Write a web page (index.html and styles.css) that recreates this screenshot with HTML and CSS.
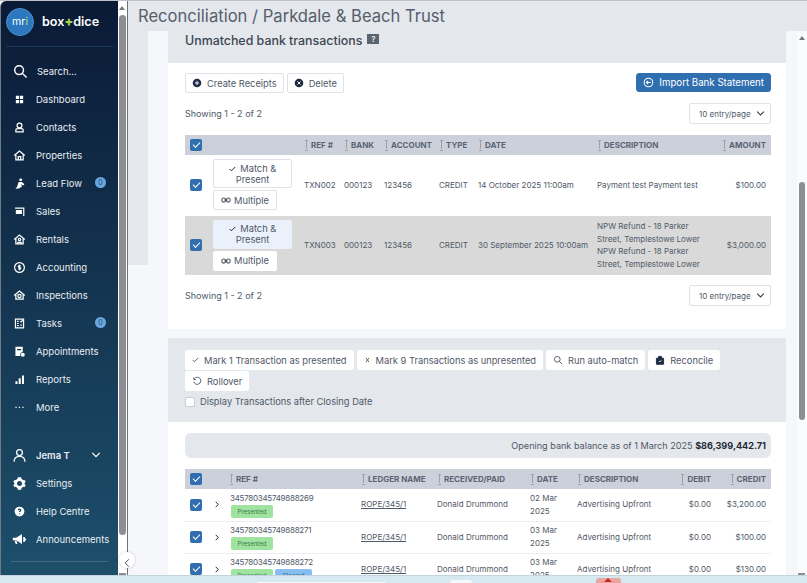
FILE: index.html
```html
<!DOCTYPE html>
<html lang="en">
<head>
<meta charset="UTF-8">
<title>Reconciliation / Parkdale &amp; Beach Trust</title>
<link rel="stylesheet" href="styles.css">
</head>
<body>
<div class="app">
    <aside class="sidebar">
        <div class="brand">
            <span class="brand-mark">mr<em>i</em></span>
            <span class="brand-name">box<b>+</b>dice</span>
        </div>
        <nav class="nav">
            <a class="nav-search"><svg viewBox="0 0 16 16"><circle cx="6.5" cy="6.5" r="4.7"/><path d="M10 10l4.5 4.5"/></svg><span>Search...</span></a>
            <a><svg viewBox="0 0 16 16"><path class="fill" d="M3.500 3.500h4v4h-4zM8.500 3.500h4v4h-4zM3.500 8.500h4v4h-4zM8.500 8.500h4v4h-4z"/></svg><span>Dashboard</span></a>
            <a><svg viewBox="0 0 16 16"><circle cx="8" cy="5.500" r="3"/><path d="M3.500 13.500v-2c0-1 1-2 2.500-2h4c1.500 0 2.500 1 2.500 2v2z"/></svg><span>Contacts</span></a>
            <a><svg viewBox="0 0 16 16"><path d="M1.500 8L8 2.500 14.500 8M3.500 7v6.500h9V7M6.500 13.500V9.500h3v4"/></svg><span>Properties</span></a>
            <a><svg viewBox="0 0 16 16"><circle class="fill" cx="9.500" cy="3.500" r="1.800"/><path class="fill" d="M7 6h4l3 3-1.500 1.500L10 9l1 3-4 2-4 .5 2-2.500 1-3z"/></svg><span>Lead Flow</span><i class="badge">0</i></a>
            <a><svg viewBox="0 0 16 16"><path class="fill" d="M2.500 3H14v10.500h-1.500V4.500h-10zM3.500 6h7.500v5H3.500z"/></svg><span>Sales</span></a>
            <a><svg viewBox="0 0 16 16"><path d="M1.500 8L8 2.500 14.500 8M3.500 7v6.500h9V7"/><circle cx="8" cy="8" r="1.500"/><path d="M6 13.500v-2h4v2"/></svg><span>Rentals</span></a>
            <a><svg viewBox="0 0 16 16"><circle cx="8" cy="8" r="6"/><path d="M8 4.500v7M9.500 6H7.500a1 1 0 000 2h1a1 1 0 010 2H6.500"/></svg><span>Accounting</span></a>
            <a><svg viewBox="0 0 16 16"><path d="M1.500 8L8 2.500 14.500 8M3.500 7v5.500h9V7"/><circle cx="8" cy="8.500" r="2"/></svg><span>Inspections</span></a>
            <a><svg viewBox="0 0 16 16"><path d="M3 2.500h10v11H3zM5 5.500h2M5 8h2M5 10.500h2M9 5l1 1 2-2M9 9.500l2 1"/></svg><span>Tasks</span><i class="badge">0</i></a>
            <a><svg viewBox="0 0 16 16"><path class="fill" d="M3 2h9v6.500a4 4 0 00-3 5H3zM5 5v1.500h5V5z"/><circle class="fill" cx="12" cy="12" r="2.500"/></svg><span>Appointments</span></a>
            <a><svg viewBox="0 0 16 16"><path class="fill" d="M3 10h2.500v3.500H3zM7 6.500h2.500v7H7zM11 3h2.500v10.500H11z"/></svg><span>Reports</span></a>
            <a><svg viewBox="0 0 16 16"><path class="fill" d="M3 7h1.500v1.500H3zM7.200 7h1.500v1.500H7.200zM11.500 7H13v1.500h-1.500z"/></svg><span>More</span></a>
        </nav>
        <div class="nav nav-bottom">
            <a class="nav-user"><svg class="big" viewBox="0 0 18 18"><circle cx="9" cy="5.500" r="3.500"/><path d="M2.500 16.500c0-4 2.500-6.500 6.500-6.500s6.500 2.500 6.500 6.500"/></svg><span>Jema T</span><svg class="chev" viewBox="0 0 12 8"><path d="M1.500 1.500L6 6l4.500-4.500"/></svg></a>
            <a><svg class="big" viewBox="0 0 18 18"><circle cx="9" cy="9" r="4.500" stroke-width="3"/><path class="fill" d="M7 1.500h4l.5 2.500h-5zM7 16.500h4l.5-2.500h-5zM1.500 6.500l2-2 2 1.500-2 3zM16.500 6.500l-2-2-2 1.500 2 3zM1.500 11.500l2 2 2-1.500-2-3zM16.500 11.500l-2 2-2-1.500 2-3z"/></svg><span>Settings</span></a>
            <a><svg viewBox="0 0 16 16"><circle class="fill" cx="8" cy="8" r="6"/><path class="cut" d="M6.500 6.500a1.500 1.500 0 113 0c0 1-1.500 1-1.500 2.200M8 10.500v1"/></svg><span>Help Centre</span></a>
            <a><svg class="big" viewBox="0 0 18 18"><path class="fill" d="M1 7h4l7-4.500v12L5 10H1zM3 10.500h2.500l1 4h-2zM13.500 6h1.500l2 3-2 3h-1.500z"/></svg><span>Announcements</span></a>
        </div>
        <div class="sidebar-rule"></div>
    </aside>
    <div class="side-scroll"><span class="thumb"></span></div>
    <main class="main">
        <button class="collapse"><svg viewBox="0 0 8 12"><path d="M6.500 1L1.500 6l5 5"/></svg></button>
        <h1 class="page-title">Reconciliation / Parkdale &amp; Beach Trust</h1>
        <div class="page-body">
            <div class="cards">
                <section class="card">
                    <h2 class="card-head">Unmatched bank transactions <span class="help">?</span></h2>
                    <div class="card-body">
                        <div class="toolbar">
                            <button class="btn"><svg viewBox="0 0 14 14"><circle class="dark" cx="7" cy="7" r="6"/><path class="lines" d="M7 4v6M4 7h6"/></svg>Create Receipts</button>
                            <button class="btn"><svg viewBox="0 0 14 14"><circle class="dark" cx="7" cy="7" r="6"/><path class="lines" d="M4.800 4.800l4.400 4.400M9.200 4.800l-4.400 4.400"/></svg>Delete</button>
                            <button class="btn btn-primary"><svg viewBox="0 0 14 14"><circle cx="7" cy="7" r="5.500"/><path d="M10 7H4.500M6.500 4.800L4.300 7l2.200 2.200"/></svg>Import Bank Statement</button>
                        </div>
                        <div class="pager">
                            <span>Showing 1 - 2 of 2</span>
                            <span class="entry">10 entry/page<svg viewBox="0 0 12 8"><path d="M1.500 1.500L6 6l4.500-4.500"/></svg></span>
                        </div>
                        <table class="grid grid-bank">
                            <colgroup><col class="c-check"><col class="c-match"><col class="c-ref"><col class="c-bank"><col class="c-acc"><col class="c-type"><col class="c-date"><col class="c-desc"><col class="c-amt"></colgroup>
                            <thead><tr>
                                <th><span class="check"></span></th><th></th>
                                <th><i class="sort"></i>REF #</th><th><i class="sort"></i>BANK</th><th><i class="sort"></i>ACCOUNT</th><th><i class="sort"></i>TYPE</th><th><i class="sort"></i>DATE</th><th><i class="sort"></i>DESCRIPTION</th><th class="num"><i class="sort"></i>AMOUNT</th>
                            </tr></thead>
                            <tbody>
                                <tr>
                                    <td><span class="check"></span></td>
                                    <td>
                                        <button class="btn btn-match"><svg viewBox="0 0 10 8"><path d="M1 4l2.500 2.500L9 1"/></svg> Match &amp;<br>Present</button>
                                        <button class="btn btn-multi"><svg viewBox="0 0 12 8"><rect x="1" y="1.500" width="4.500" height="5" rx="2.200"/><rect x="6.500" y="1.500" width="4.500" height="5" rx="2.200"/><path d="M4 4h4"/></svg>Multiple</button>
                                    </td>
                                    <td>TXN002</td><td>000123</td><td>123456</td><td>CREDIT</td><td>14 October 2025 11:00am</td><td>Payment test Payment test</td><td class="num">$100.00</td>
                                </tr>
                                <tr class="picked">
                                    <td><span class="check"></span></td>
                                    <td>
                                        <button class="btn btn-match"><svg viewBox="0 0 10 8"><path d="M1 4l2.500 2.500L9 1"/></svg> Match &amp;<br>Present</button>
                                        <button class="btn btn-multi"><svg viewBox="0 0 12 8"><rect x="1" y="1.500" width="4.500" height="5" rx="2.200"/><rect x="6.500" y="1.500" width="4.500" height="5" rx="2.200"/><path d="M4 4h4"/></svg>Multiple</button>
                                    </td>
                                    <td>TXN003</td><td>000123</td><td>123456</td><td>CREDIT</td><td>30 September 2025 10:00am</td><td class="desc-long">NPW Refund - 18 Parker Street, Templestowe Lower NPW Refund - 18 Parker Street, Templestowe Lower</td><td class="num">$3,000.00</td>
                                </tr>
                            </tbody>
                        </table>
                        <div class="pager pager-foot">
                            <span>Showing 1 - 2 of 2</span>
                            <span class="entry">10 entry/page<svg viewBox="0 0 12 8"><path d="M1.500 1.500L6 6l4.500-4.500"/></svg></span>
                        </div>
                    </div>
                </section>
                <section class="card">
                    <div class="actions">
                        <div class="action-row">
                            <button class="btn"><svg class="tick" viewBox="0 0 10 8"><path d="M1 4l2.500 2.500L9 1"/></svg>Mark 1 Transaction as presented</button>
                            <button class="btn"><svg class="tick" viewBox="0 0 10 8"><path d="M3 1l4 6M7 1L3 7"/></svg>Mark 9 Transactions as unpresented</button>
                            <button class="btn"><svg viewBox="0 0 14 14"><circle cx="6" cy="6" r="4"/><path d="M9 9l3.500 3.500"/></svg>Run auto-match</button>
                            <button class="btn"><svg viewBox="0 0 14 14"><path class="solid" d="M2 4.500h10V13H2zM5 4.500V2h4v2.500"/><path class="lines" d="M5.500 8.500l1.200 1.200 2-2.200"/></svg>Reconcile</button>
                            <button class="btn"><svg viewBox="0 0 14 14"><path d="M3.500 3.500a5 5 0 11-1 4.500M2.500 2v3h3"/></svg>Rollover</button>
                        </div>
                        <label class="show-after"><span class="box"></span>Display Transactions after Closing Date</label>
                    </div>
                    <div class="card-body card-body-ledger">
                        <div class="balance">Opening bank balance as of 1 March 2025 <b>$86,399,442.71</b></div>
                        <table class="grid grid-ledger">
                            <colgroup><col class="l-check"><col class="l-arrow"><col class="l-ref"><col class="l-name"><col class="l-paid"><col class="l-date"><col class="l-desc"><col class="l-debit"><col class="l-credit"></colgroup>
                            <thead><tr>
                                <th><span class="check"></span></th><th></th>
                                <th><i class="sort"></i>REF #</th><th><i class="sort"></i>LEDGER NAME</th><th><i class="sort"></i>RECEIVED/PAID</th><th><i class="sort"></i>DATE</th><th><i class="sort"></i>DESCRIPTION</th><th class="num"><i class="sort"></i>DEBIT</th><th class="num"><i class="sort"></i>CREDIT</th>
                            </tr></thead>
                            <tbody>
                                <tr>
                                    <td><span class="check"></span></td><td><svg class="arrow" viewBox="0 0 6 10"><path d="M1 1l4 4-4 4"/></svg></td>
                                    <td><span class="ref-no">345780345749888269</span><br><span class="tag">Presented</span></td>
                                    <td><a>ROPE/345/1</a></td><td>Donald Drummond</td><td>02 Mar 2025</td><td>Advertising Upfront</td><td class="num">$0.00</td><td class="num">$3,200.00</td>
                                </tr>
                                <tr>
                                    <td><span class="check"></span></td><td><svg class="arrow" viewBox="0 0 6 10"><path d="M1 1l4 4-4 4"/></svg></td>
                                    <td><span class="ref-no">345780345749888271</span><br><span class="tag">Presented</span></td>
                                    <td><a>ROPE/345/1</a></td><td>Donald Drummond</td><td>03 Mar 2025</td><td>Advertising Upfront</td><td class="num">$0.00</td><td class="num">$100.00</td>
                                </tr>
                                <tr>
                                    <td><span class="check"></span></td><td><svg class="arrow" viewBox="0 0 6 10"><path d="M1 1l4 4-4 4"/></svg></td>
                                    <td><span class="ref-no">345780345749888272</span><br><span class="tag">Presented</span><span class="tag tag-blue">Cleared</span></td>
                                    <td><a>ROPE/345/1</a></td><td>Donald Drummond</td><td>03 Mar 2025</td><td>Advertising Upfront</td><td class="num">$0.00</td><td class="num">$130.00</td>
                                </tr>
                            </tbody>
                        </table>
                    </div>
                </section>
            </div>
            <div class="page-scroll"><span class="thumb"></span></div>
        </div>
    </main>
</div>
<div class="taskbar">
    <span class="task-slot task-slot-wide"></span>
    <span class="task-slot task-slot-small"></span>
    <span class="task-pip"></span>
</div>
</body>
</html>
```
FILE: styles.css
```css
:root{
    --ink:#505967;
    --grey:#e4e7ec;
    --pale:#f5f7fb;
    --head:#cbd0da;
    --blue:#2f6eaf;
}
*{
    box-sizing:border-box;
}
html,body{
    height:100%;
}
body{
    margin:0;
    overflow:hidden;
    display:flex;
    flex-direction:column;
    background:var(--pale);
    font-family:Inter,"Liberation Sans",sans-serif;
    color:var(--ink);
}
button{
    font:inherit;
    color:inherit;
}
.app{
    flex:1;
    min-height:0;
    display:flex;
    border-top:1px solid #bfc3c7;
}

/* sidebar */
.sidebar{
    width:118px;
    flex:none;
    display:flex;
    flex-direction:column;
    border-left:1px solid #6f7c86;
    border-top-left-radius:6px;
    background:linear-gradient(#0a1a36,#1d4f6b);
    color:#e8edf2;
    font-size:9.5px;
}
.brand{
    height:46px;
    margin:0 5px 0 5px;
    padding-top:7px;
    display:flex;
    align-items:flex-start;
    gap:8px;
    border-bottom:1px solid #1d3a5c;
}
.brand-mark{
    width:28px;
    height:28px;
    border-radius:50%;
    border:1px solid #4c8fcb;
    background:#2c78bf;
    color:#fff;
    font-size:10.5px;
    line-height:25px;
    text-align:center;
}
.brand-mark em{
    font-style:normal;
    color:#b9e07a;
}
.brand-name{
    margin-top:6px;
    color:#fff;
    font-size:12.6px;
    font-weight:600;
}
.brand-name b{
    color:#a5cf4c;
}
.nav{
    display:flex;
    flex-direction:column;
    padding-top:10px;
}
.nav a{
    position:relative;
    height:28px;
    padding-left:12px;
    display:flex;
    align-items:center;
    gap:10px;
    white-space:nowrap;
}
.nav svg{
    width:13px;
    height:13px;
    flex:none;
    fill:none;
    stroke:#fff;
    stroke-width:1.5;
}
.nav svg .fill{
    fill:#fff;
    stroke:none;
}
.nav svg .cut{
    stroke:#1b4560;
}
.nav svg.big{
    width:15px;
    height:15px;
    margin-left:-1px;
    margin-right:-1px;
}
.nav .nav-search svg{
    width:15px;
    height:15px;
    margin-right:-1px;
}
.nav svg.chev{
    position:absolute;
    left:90px;
    top:9px;
    width:10px;
    height:8px;
}
.badge{
    position:absolute;
    left:94px;
    top:8px;
    width:11px;
    height:11px;
    border-radius:50%;
    background:#6aa7e0;
    color:#1d4f6b;
    font-style:normal;
    font-size:7px;
    line-height:11px;
    text-align:center;
}
.nav-bottom{
    padding-top:21px;
}
.nav .nav-user{
    height:27px;
    font-weight:600;
}
.sidebar-rule{
    height:1px;
    margin:8px 10px 0;
    background:#45697f;
}
.side-scroll{
    position:relative;
    width:10px;
    flex:none;
    background:#fff;
    border-right:1px solid #6f7378;
}
.side-scroll .thumb,
.page-scroll .thumb{
    position:absolute;
    background:#8c8e91;
}
.side-scroll .thumb{
    left:1px;
    top:14px;
    width:7px;
    height:520px;
    border-radius:4px;
}
/* the small arrows at each end of the scrollbars */
.side-scroll::before,
.page-scroll::before{
    content:"";
    position:absolute;
    left:1px;
    top:5px;
    border:3px solid transparent;
    border-top:none;
    border-bottom:4px solid #777;
}
.side-scroll::after,
.page-scroll::after{
    content:"";
    position:absolute;
    left:1px;
    bottom:0;
    width:7px;
    height:2px;
    background:#8c8e91;
}

/* page */
.main{
    position:relative;
    flex:1;
    min-width:0;
    display:flex;
    flex-direction:column;
    background:linear-gradient(var(--grey) 264px,var(--pale) 264px);
}
.collapse{
    position:absolute;
    left:-9px;
    top:551px;
    width:16px;
    height:16px;
    padding:0;
    border:none;
    border-radius:50%;
    background:#fff;
    box-shadow:0 0 3px rgba(0,0,0,.2);
}
.collapse svg{
    width:6px;
    height:10px;
    fill:none;
    stroke:#4b5563;
    stroke-width:1.3;
}
.page-title{
    height:30px;
    margin:0;
    padding:6px 0 0 10px;
    font-size:16.6px;
    line-height:19px;
    font-weight:400;
    color:#565e6b;
}
.page-body{
    flex:1;
    min-height:0;
    margin-left:20px;
    display:flex;
    background:var(--pale);
}
.cards{
    width:638px;
    padding-left:20px;
    display:flex;
    flex-direction:column;
    gap:9px;
}
.page-scroll{
    position:relative;
    flex:1;
    margin-left:11px;
    background:#fafbfd;
}
.page-scroll::before{
    left:2px;
}
.page-scroll .thumb{
    left:2px;
    top:151px;
    width:6px;
    height:238px;
    border-radius:3px;
}
.card{
    background:#fff;
    font-size:8px;
    width:618px;
}
.card-head{
    height:32px;
    margin:0;
    padding:1px 17px 0;
    display:flex;
    align-items:flex-start;
    gap:5px;
    background:var(--grey);
    font-size:12.4px;
    line-height:18px;
    font-weight:500;
    color:#3d4653;
}
.help{
    width:12px;
    height:10px;
    margin-top:2px;
    background:#5b6470;
    color:#fff;
    font-size:8px;
    line-height:10px;
    text-align:center;
}
.card-body{
    padding:10px 15px 23px 17px;
}
.card-body-ledger{
    padding-top:11px;
    padding-bottom:0;
}
.toolbar{
    display:flex;
    gap:3px;
    align-items:flex-start;
}
.btn{
    height:20px;
    padding:0 6px;
    display:inline-flex;
    align-items:center;
    gap:5px;
    background:#fff;
    border:1px solid #dfe2e7;
    border-radius:2px;
    font-size:9.3px;
    white-space:nowrap;
}
.btn svg{
    width:10px;
    height:10px;
    flex:none;
    fill:none;
    stroke:currentColor;
    stroke-width:1.3;
}
.btn svg .dark{
    fill:#1f2a44;
    stroke:none;
}
.btn svg .solid{
    fill:#1f2a44;
    stroke:#1f2a44;
}
.btn svg .lines{
    stroke:#fff;
}
.btn svg.tick{
    width:7px;
    height:6px;
}
.btn-primary{
    margin-left:auto;
    height:19px;
    background:var(--blue);
    border-color:var(--blue);
    color:#fff;
    font-size:9.7px;
    border-radius:3px;
}
.btn-primary svg{
    width:11px;
    height:11px;
}
.pager{
    margin-top:10px;
    height:21px;
    display:flex;
    justify-content:space-between;
    align-items:center;
    font-size:9px;
}
.pager-foot{
    margin-top:10px;
}
.entry{
    width:82px;
    height:21px;
    padding:0 5px 0 9px;
    display:flex;
    align-items:center;
    justify-content:space-between;
    border:1px solid #dfe2e7;
    border-radius:2px;
    font-size:8px;
}
.entry svg{
    width:9px;
    height:7px;
    fill:none;
    stroke:#374151;
    stroke-width:1.5;
}
.grid{
    width:586px;
    margin-top:11px;
    border-collapse:collapse;
    table-layout:fixed;
    font-size:8px;
}
.grid th{
    height:20px;
    padding:0 5px 0 0;
    background:var(--head);
    text-align:left;
    font-size:8px;
    font-weight:700;
    color:#5b6472;
    white-space:nowrap;
}
.grid td{
    padding:0 5px 0 0;
    vertical-align:middle;
}
.grid .num{
    text-align:right;
}
.sort{
    position:relative;
    display:inline-block;
    width:3px;
    height:9px;
    margin:0 3px 0 1px;
    vertical-align:-1px;
}
.sort::before{
    content:"";
    position:absolute;
    left:1px;
    top:0;
    width:1px;
    height:9px;
    background:#9ca2ad;
}
.sort::after{
    content:"";
    position:absolute;
    left:0;
    top:0;
    width:3px;
    height:9px;
    border-top:1px solid #9ca2ad;
    border-bottom:1px solid #9ca2ad;
}
.check{
    display:block;
    width:12px;
    height:12px;
    margin-left:5px;
    border-radius:2px;
    background:var(--blue);
    position:relative;
}
.check::after{
    content:"";
    position:absolute;
    left:3px;
    top:3px;
    width:6px;
    height:3px;
    border-left:1.3px solid #fff;
    border-bottom:1.3px solid #fff;
    transform:rotate(-45deg);
}
.c-check{width:28px}
.c-match{width:91px}
.c-ref{width:40px}
.c-bank{width:40px}
.c-acc{width:55px}
.c-type{width:39px}
.c-date{width:119px}
.c-desc{width:118px}
.c-amt{width:56px}
.grid-bank tbody tr{
    height:60px;
}
.grid-bank tbody tr + tr td{
    border-top:1px solid #fff;
}
.desc-long{
    line-height:12.5px;
}
.picked td{
    background:#d9d9d9;
}
.btn-match{
    display:block;
    width:79px;
    height:29px;
    padding:0;
    line-height:11px;
    text-align:center;
    font-size:9.3px;
}
.btn-match svg{
    width:7px;
    height:6px;
    margin-right:2px;
    color:#111827;
}
.btn-multi{
    height:20px;
    margin-top:2px;
    padding:0 7px;
    gap:3px;
}
.picked .btn-match{
    background:#eaf1fa;
    border-color:#eaf1fa;
}
.picked .btn-multi{
    border-color:#fff;
}

/* second card */
.actions{
    height:84px;
    padding:12px 17px 0;
    background:var(--grey);
}
.action-row{
    display:flex;
    flex-wrap:wrap;
    gap:1px 3px;
}
.actions .btn{
    border-color:#fff;
}
.show-after{
    margin-top:5px;
    display:flex;
    align-items:center;
    gap:5px;
    font-size:9.3px;
}
.box{
    width:10px;
    height:10px;
    background:#fff;
    border:1px solid #c9ced6;
    border-radius:2px;
}
.balance{
    height:25px;
    padding-right:5px;
    border-radius:6px;
    background:var(--grey);
    text-align:right;
    font-size:9.1px;
    line-height:25px;
}
.balance b{
    color:#1f2937;
}
.l-check{width:28px}
.l-arrow{width:16px}
.l-ref{width:132px}
.l-name{width:76px}
.l-paid{width:93px}
.l-date{width:47px}
.l-desc{width:103px}
.l-debit{width:36px}
.l-credit{width:55px}
.grid-ledger tbody tr{
    height:32px;
    border-bottom:1px solid #eceef1;
}
.grid-ledger td{
    line-height:13px;
}
.arrow{
    display:block;
    margin-left:2px;
    width:4px;
    height:7px;
    fill:none;
    stroke:#1f2937;
    stroke-width:1.5;
}
.grid-ledger a{
    text-decoration:underline;
}
.ref-no{
    margin-left:1px;
    letter-spacing:-.27px;
}
.tag{
    display:inline-block;
    width:42px;
    height:13px;
    margin-left:2px;
    border-radius:2px;
    background:#9fe3a0;
    color:#3d7a4a;
    font-size:6px;
    line-height:13px;
    text-align:center;
    vertical-align:top;
}
.tag-blue{
    width:37px;
    background:#87bdf0;
    color:#2f5f8a;
}

/* strip of the window below the page */
.taskbar{
    position:relative;
    height:8px;
    flex:none;
    background:#d6e8f0;
    border-top:1px solid #c3d4dc;
}
.task-slot{
    position:absolute;
    bottom:0;
    background:#f4f8fa;
    border-radius:3px 3px 0 0;
}
.task-slot-wide{
    left:257px;
    width:128px;
    height:1px;
}
.task-slot-small{
    left:450px;
    width:22px;
    height:3px;
}
.task-pip{
    position:absolute;
    left:596px;
    top:2px;
    width:25px;
    height:6px;
    border-radius:3px 3px 0 0;
    background:#e9a6a0;
}
.task-pip::after{
    content:"";
    position:absolute;
    left:8px;
    top:0;
    border:4px solid transparent;
    border-top:none;
    border-bottom:4px solid #c8281e;
}
```
